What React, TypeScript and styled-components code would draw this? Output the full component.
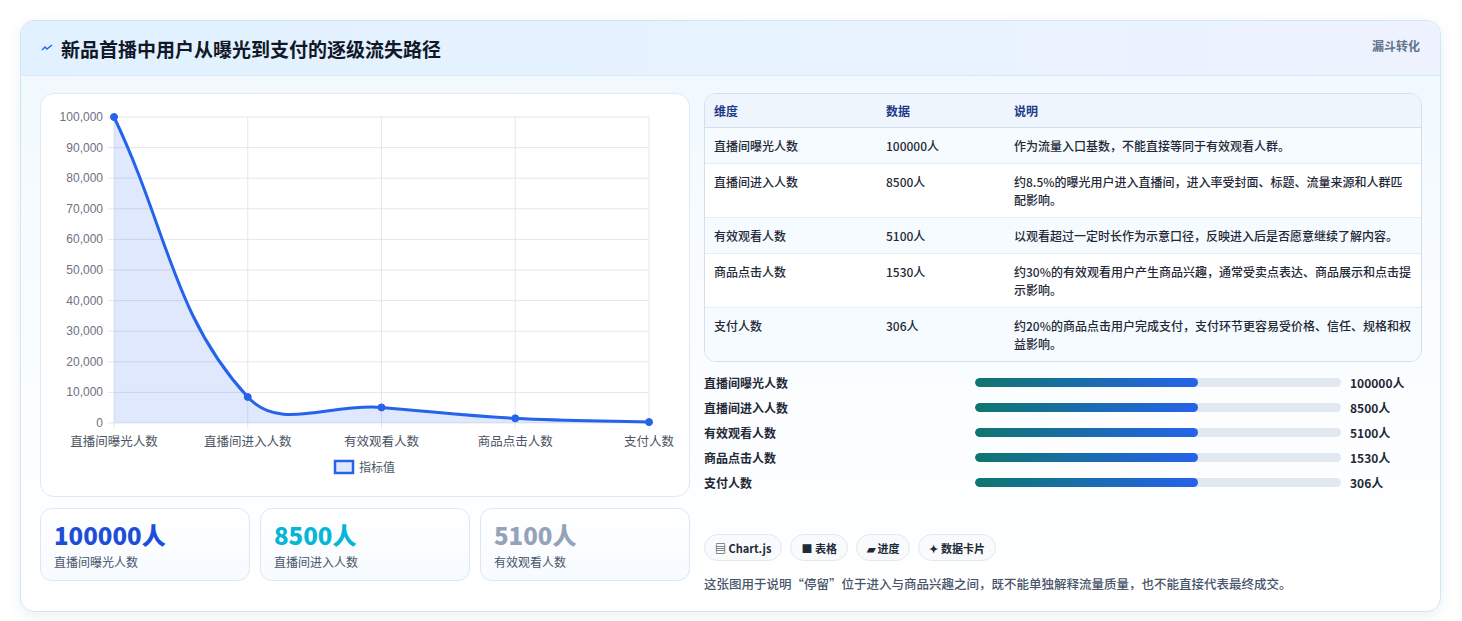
import React from 'react'
import styled, {createGlobalStyle} from 'styled-components'

const Global = createGlobalStyle`
  body {
    margin: 0;
    background: #ffffff;
    font-family: "Noto Sans CJK SC", "Noto Sans", sans-serif;
  }
`;

const Page = styled.div`
  padding: 20px 21px 22px 20px;
`;

const Card = styled.div`
  border: 1px solid #cfe6f5;
  border-radius: 14px;
  overflow: hidden;
  background: linear-gradient(180deg, #eef8ff 0%, #f8fcff 40%, #ffffff 100%);
  box-shadow: 0 4px 14px rgba(30, 60, 100, 0.08);
`;

const Header = styled.div`
  height: 55px;
  display: flex;
  align-items: center;
  justify-content: space-between;
  padding: 0 20px 0 20px;
  background: linear-gradient(90deg, #e1f1ff 0%, #e8f3ff 60%, #eef2ff 100%);
  border-bottom: 1px solid #d8eaf7;
  box-sizing: border-box;
`;

const Title = styled.h1`
  margin: 0;
  font-size: 19px;
  font-weight: 700;
  color: #111827;
  display: flex;
  align-items: center;
  gap: 8px;
`;

const Tag = styled.span`
  font-size: 12px;
  font-weight: 700;
  color: #64748b;
  align-self: flex-start;
  margin-top: 16px;
`;

const Body = styled.div`
  display: grid;
  grid-template-columns: 650px 1fr;
  gap: 14px;
  padding: 17px 18px 18px 19px;
`;

const Col = styled.div`
  display: flex;
  flex-direction: column;
`;

const ChartPanel = styled.div`
  height: 404px;
  border: 1px solid #e2e8f0;
  border-radius: 14px;
  background: #ffffff;
  box-sizing: border-box;
`;

const Stats = styled.div`
  display: grid;
  grid-template-columns: repeat(3, 1fr);
  gap: 10px;
  margin-top: 11px;
`;

const Stat = styled.div`
  height: 73px;
  box-sizing: border-box;
  border: 1px solid #dbe7f5;
  border-radius: 12px;
  background: linear-gradient(180deg, #ffffff, #f7fbff);
  padding: 10px 13px;
`;

const StatValue = styled.div<{$c: string}>`
  font-size: 24px;
  font-weight: 800;
  color: ${p => p.$c};
  line-height: 32px;
`;

const StatLabel = styled.div`
  font-size: 12px;
  color: #475569;
  margin-top: 2px;
`;

const TableWrap = styled.div`
  border: 1px solid #d5dfea;
  border-radius: 12px;
  overflow: hidden;
  background: #ffffff;
`;

const Table = styled.table`
  width: 100%;
  border-collapse: collapse;
  font-size: 12px;
  color: #1f2937;
  font-weight: 500;
  th {
    text-align: left;
    font-weight: 600;
    color: #1e3a8a;
    background: #eef5fd;
    height: 33px;
    padding: 0 9px;
    border-bottom: 1px solid #d5dfea;
  }
  td {
    vertical-align: top;
    padding: 9px 9px 8px;
    line-height: 18px;
    border-bottom: 1px solid #e5edf5;
  }
  tr:nth-child(odd) td { background: #f6fbff; }
  tr:last-child td { border-bottom: none; }
`;

const Bars = styled.div`
  display: flex;
  flex-direction: column;
  gap: 7px;
  margin-top: 11px;
`;

const BarRow = styled.div`
  display: grid;
  grid-template-columns: 271px 375px 1fr;
  align-items: center;
  gap: 0;
  height: 18px;
  font-size: 12px;
  font-weight: 600;
  color: #1f2937;
`;

const Track = styled.div`
  height: 9px;
  border-radius: 5px;
  background: #e2e8f0;
  margin-right: 9px;
  overflow: hidden;
`;

const Fill = styled.div`
  height: 100%;
  border-radius: 5px;
  background: linear-gradient(90deg, #0f766e, #2563eb);
`;

const Chips = styled.div`
  display: flex;
  gap: 8px;
  margin-top: 43px;
`;

const Chip = styled.span`
  height: 27px;
  box-sizing: border-box;
  padding: 0 10px;
  border: 1px solid #e2e8f0;
  border-radius: 14px;
  background: #f8fafc;
  display: inline-flex;
  align-items: center;
  gap: 4px;
  font-size: 11px;
  font-weight: 600;
  color: #1f2937;
`;

const Note = styled.p`
  margin: 13px 0 0;
  font-size: 12.5px;
  color: #475569;
  font-weight: 500;
`;

const labels = ['直播间曝光人数', '直播间进入人数', '有效观看人数', '商品点击人数', '支付人数'];
const values = [100000, 8500, 5100, 1530, 306];

const PX0 = 73, PX1 = 608, PY0 = 23, PY1 = 329;

function buildPath() {
  const pts = values.map((v, i) => ({
    x: PX0 + (i * (PX1 - PX0)) / 4,
    y: PY1 - (v / 100000) * (PY1 - PY0),
  }));
  const t = 0.4;
  const cps = pts.map((c, i) => {
    const p = pts[i - 1] || c;
    const n = pts[i + 1] || c;
    const d01 = Math.hypot(c.x - p.x, c.y - p.y);
    const d12 = Math.hypot(n.x - c.x, n.y - c.y);
    const s = d01 + d12 || 1;
    const fa = (t * d01) / s, fb = (t * d12) / s;
    return {
      px: c.x - fa * (n.x - p.x), py: c.y - fa * (n.y - p.y),
      nx: c.x + fb * (n.x - p.x), ny: c.y + fb * (n.y - p.y),
    };
  });
  let d = `M${pts[0].x},${pts[0].y}`;
  for (let i = 1; i < pts.length; i++) {
    d += ` C${cps[i - 1].nx},${cps[i - 1].ny} ${cps[i].px},${cps[i].py} ${pts[i].x},${pts[i].y}`;
  }
  return {d, pts};
}

function Chart() {
  const {d, pts} = buildPath();
  const ticks = Array.from({length: 11}, (_, i) => i * 10000);
  return (
    <svg width="650" height="404" viewBox="0 0 650 404">
      {ticks.map(tk => {
        const y = PY1 - (tk / 100000) * (PY1 - PY0);
        return (
          <g key={tk}>
            <line x1={PX0 - 6} x2={PX1} y1={y} y2={y} stroke="#e5e7eb" />
            <text x={PX0 - 11} y={y + 4} fontSize="12" fill="#6b7280" textAnchor="end" fontFamily="Liberation Sans, sans-serif">
              {tk.toLocaleString('en-US')}
            </text>
          </g>
        );
      })}
      {labels.map((l, i) => {
        const x = PX0 + (i * (PX1 - PX0)) / 4;
        return (
          <g key={l}>
            <line x1={x} x2={x} y1={PY0} y2={PY1 + 6} stroke="#e5e7eb" />
            <text x={x} y={PY1 + 23} fontSize="12.5" fill="#4b5563" textAnchor="middle">{l}</text>
          </g>
        );
      })}
      <path d={`${d} L${PX1},${PY1} L${PX0},${PY1} Z`} fill="rgba(37,99,235,0.15)" />
      <path d={d} fill="none" stroke="#2563eb" strokeWidth="3" />
      {pts.map((p, i) => (
        <circle key={i} cx={p.x} cy={p.y} r="3.5" fill="#2563eb" stroke="#2563eb" />
      ))}
      <rect x="294" y="367" width="18" height="12" fill="rgba(37,99,235,0.15)" stroke="#2563eb" strokeWidth="2.5" />
      <text x="318" y="378" fontSize="12" fill="#4b5563">指标值</text>
    </svg>
  );
}

const rows = [
  ['直播间曝光人数', '100000人', '作为流量入口基数，不能直接等同于有效观看人群。'],
  ['直播间进入人数', '8500人', '约8.5%的曝光用户进入直播间，进入率受封面、标题、流量来源和人群匹配影响。'],
  ['有效观看人数', '5100人', '以观看超过一定时长作为示意口径，反映进入后是否愿意继续了解内容。'],
  ['商品点击人数', '1530人', '约30%的有效观看用户产生商品兴趣，通常受卖点表达、商品展示和点击提示影响。'],
  ['支付人数', '306人', '约20%的商品点击用户完成支付，支付环节更容易受价格、信任、规格和权益影响。'],
];

export default function App() {
  return (
    <Page>
      <Global />
      <Card>
        <Header>
          <Title>
            <svg width="12" height="12" viewBox="0 0 12 12">
              <path d="M1 8 L4 5 L6 7 L11 3" fill="none" stroke="#2563eb" strokeWidth="1.4" />
            </svg>
            新品首播中用户从曝光到支付的逐级流失路径
          </Title>
          <Tag>漏斗转化</Tag>
        </Header>
        <Body>
          <Col>
            <ChartPanel><Chart /></ChartPanel>
            <Stats>
              <Stat><StatValue $c="#1d4ed8">100000人</StatValue><StatLabel>直播间曝光人数</StatLabel></Stat>
              <Stat><StatValue $c="#06b6d4">8500人</StatValue><StatLabel>直播间进入人数</StatLabel></Stat>
              <Stat><StatValue $c="#94a3b8">5100人</StatValue><StatLabel>有效观看人数</StatLabel></Stat>
            </Stats>
          </Col>
          <Col>
            <TableWrap>
              <Table>
                <colgroup>
                  <col style={{width: 172}} />
                  <col style={{width: 128}} />
                  <col />
                </colgroup>
                <thead>
                  <tr><th>维度</th><th>数据</th><th>说明</th></tr>
                </thead>
                <tbody>
                  {rows.map(r => (
                    <tr key={r[0]}><td>{r[0]}</td><td>{r[1]}</td><td>{r[2]}</td></tr>
                  ))}
                </tbody>
              </Table>
            </TableWrap>
            <Bars>
              {rows.map(r => (
                <BarRow key={r[0]}>
                  <span>{r[0]}</span>
                  <Track><Fill style={{width: '61%'}} /></Track>
                  <span>{r[1]}</span>
                </BarRow>
              ))}
            </Bars>
            <Chips>
              <Chip>▤ Chart.js</Chip>
              <Chip>■ 表格</Chip>
              <Chip>▰ 进度</Chip>
              <Chip>✦ 数据卡片</Chip>
            </Chips>
            <Note>这张图用于说明“停留”位于进入与商品兴趣之间，既不能单独解释流量质量，也不能直接代表最终成交。</Note>
          </Col>
        </Body>
      </Card>
    </Page>
  );
}
